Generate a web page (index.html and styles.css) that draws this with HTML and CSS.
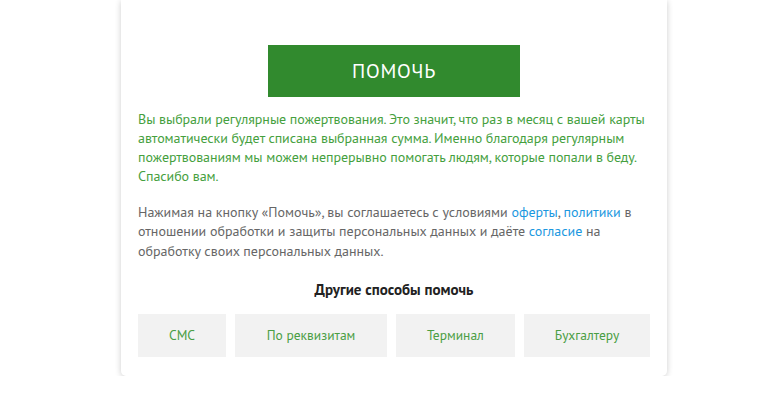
FILE: index.html
```html
<!DOCTYPE html>
<html lang="ru">
<head>
    <meta charset="UTF-8">
    <title>Помочь</title>
    <link rel="stylesheet" href="styles.css">
</head>
<body>
    <div class="card">
        <div class="submit-row">
            <button class="btn-help">ПОМОЧЬ</button>
        </div>
        <p class="note">Вы выбрали регулярные пожертвования. Это значит, что раз в месяц с вашей карты автоматически будет списана выбранная сумма. Именно благодаря регулярным пожертвованиям мы можем непрерывно помогать людям, которые попали в беду. Спасибо вам.</p>
        <p class="terms">Нажимая на кнопку «Помочь», вы соглашаетесь с условиями <a href="#">оферты</a>, <a href="#">политики</a> в отношении обработки и защиты персональных данных и даёте <a href="#">согласие</a> на обработку своих персональных данных.</p>
        <h4>Другие способы помочь</h4>
        <div class="ways">
            <a href="#" class="way">СМС</a>
            <a href="#" class="way">По реквизитам</a>
            <a href="#" class="way">Терминал</a>
            <a href="#" class="way">Бухгалтеру</a>
        </div>
    </div>
</body>
</html>
```

FILE: styles.css
```css
body { margin: 0; background: #fff; font-family: "PT Sans", "Noto Sans", sans-serif; font-size: 14px; }
.card { width: 512px; margin-left: 121px; padding: 45px 17px 19px; background: #fff; border-radius: 0 0 5px 5px; box-shadow: 0 1px 6px rgba(0,0,0,0.2); }
.submit-row { display: flex; justify-content: center; }
.btn-help { width: 252px; height: 52px; border: 0; background: #318a2e; color: #fff; font-family: inherit; font-size: 20px; letter-spacing: 0.8px; }
.note { margin: 13px 0 0; color: #45a03e; line-height: 19.1px; letter-spacing: -0.05px; }
.terms { margin: 17px 0 0; color: #666; line-height: 19.1px; }
.terms a { color: #1b98e0; text-decoration: none; }
h4 { margin: 19px 0 0; text-align: center; font-size: 15px; font-weight: bold; color: #222; }
.ways { display: grid; grid-template-columns: 88px 152px 119px 126px; gap: 9px; margin-top: 15px; }
.way { display: flex; align-items: center; justify-content: center; height: 43px; background: #f2f2f2; color: #4a9e44; font-size: 13.5px; text-decoration: none; }
```
